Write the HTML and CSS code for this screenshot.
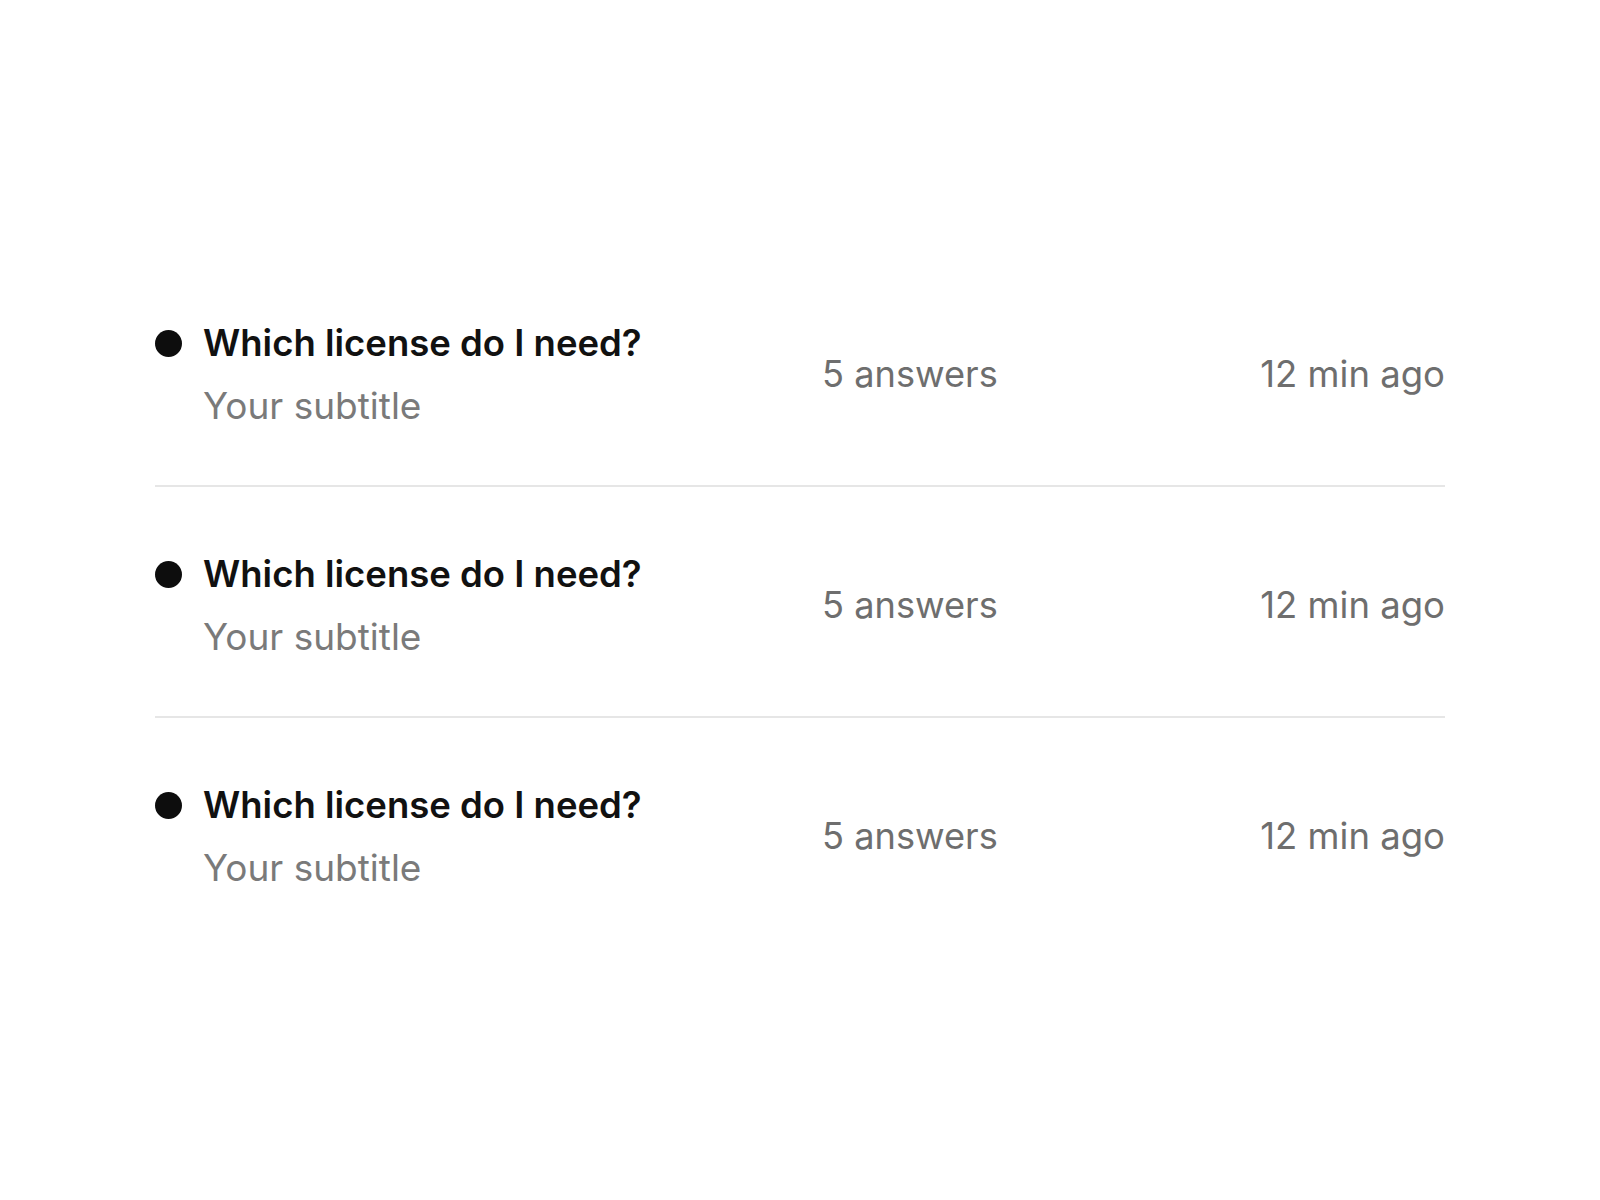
FILE: index.html
```html
<!DOCTYPE html>
<html lang="en">
<head>
<meta charset="UTF-8">
<title>Topics</title>
<link rel="stylesheet" href="styles.css">
</head>
<body>
<ul class="topic-list">
  <li class="topic">
    <div class="topic-main">
      <div class="topic-title"><span class="dot"></span>Which license do I need?</div>
      <div class="topic-subtitle">Your subtitle</div>
    </div>
    <div class="topic-answers">5 answers</div>
    <div class="topic-time">12 min ago</div>
  </li>
  <li class="topic">
    <div class="topic-main">
      <div class="topic-title"><span class="dot"></span>Which license do I need?</div>
      <div class="topic-subtitle">Your subtitle</div>
    </div>
    <div class="topic-answers">5 answers</div>
    <div class="topic-time">12 min ago</div>
  </li>
  <li class="topic">
    <div class="topic-main">
      <div class="topic-title"><span class="dot"></span>Which license do I need?</div>
      <div class="topic-subtitle">Your subtitle</div>
    </div>
    <div class="topic-answers">5 answers</div>
    <div class="topic-time">12 min ago</div>
  </li>
</ul>
</body>
</html>
```

FILE: styles.css
```css
body {
  margin: 0;
  background: #fff;
  font-family: Inter, "Liberation Sans", Arial, sans-serif;
  color: #111;
}

.topic-list {
  list-style: none;
  width: 1290px;
  margin: 256px auto 0;
  padding: 0;
}

.topic {
  display: grid;
  grid-template-columns: 667px 1fr auto;
  align-items: center;
  padding: 65px 0 57px;
  border-bottom: 2px solid #e6e6e6;
}

.topic:last-child { border-bottom: none; }

.topic-title {
  display: flex;
  align-items: center;
  gap: 21px;
  font-size: 36.5px;
  line-height: 44px;
  font-weight: 600;
  color: #111;
}

.dot {
  width: 27px;
  height: 27px;
  border-radius: 50%;
  background: #0d0d0d;
  flex: none;
}

.topic-subtitle {
  margin: 19px 0 0 48px;
  font-size: 37px;
  line-height: 44px;
  color: #7a7a7a;
}

.topic-answers, .topic-time {
  padding-bottom: 1px;
  font-size: 36.5px;
  line-height: 44px;
  color: #6e6e6e;
}

.topic-answers { font-size: 36.2px; }

.topic-time { text-align: right; }
```
